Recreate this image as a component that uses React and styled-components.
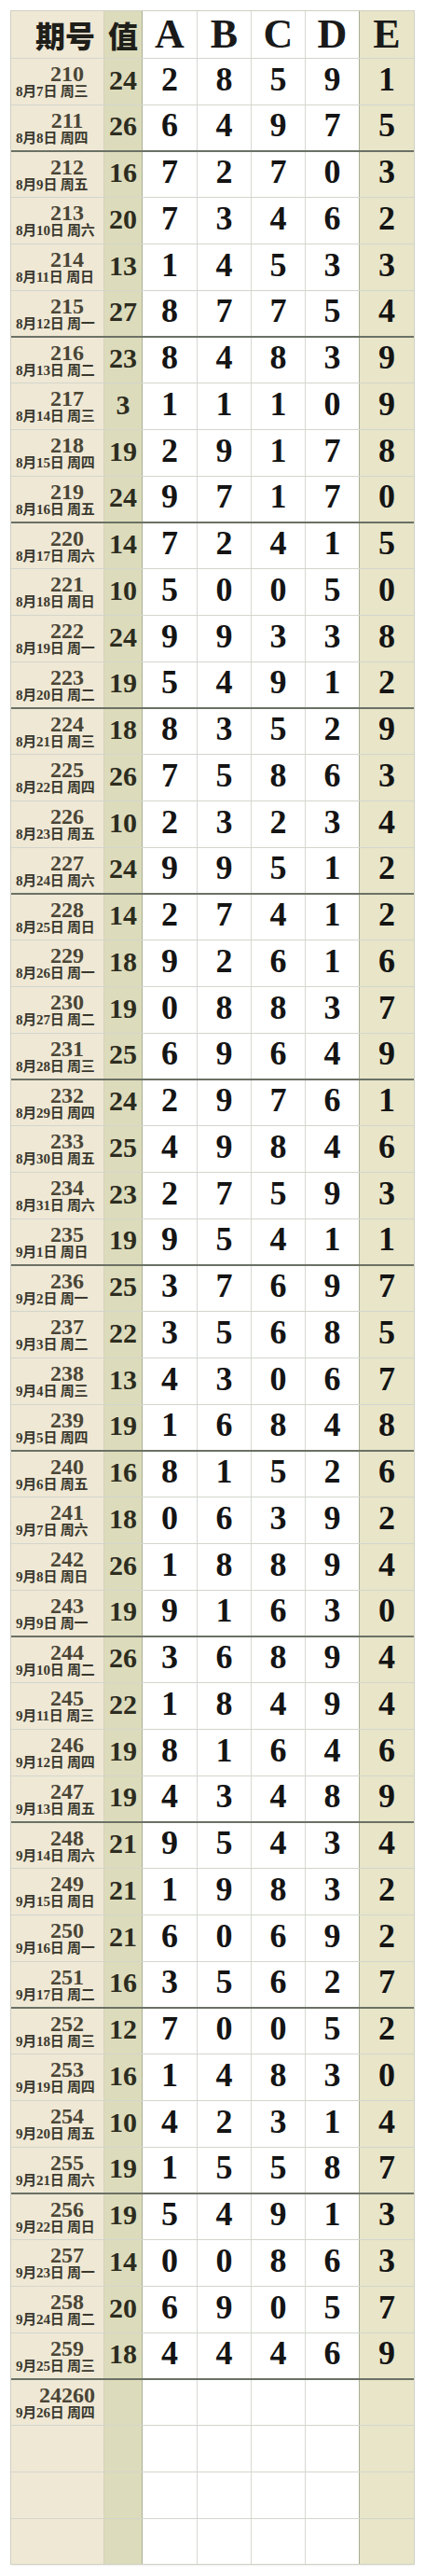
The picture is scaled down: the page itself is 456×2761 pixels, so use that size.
import React from "react";
import styled, { createGlobalStyle } from "styled-components";

const GlobalStyle = createGlobalStyle`
  html, body { margin: 0; padding: 0; background: #ffffff; }
  body { font-family: "Liberation Serif", "Noto Sans CJK SC", serif; }
`;

const COLS = "99px 42px 58px 58px 58px 58px 59px";
const ROW_H = "49.75px";

const Page = styled.div`
  padding: 12px 12px 13px 12px;
  width: 432px;
`;

const Table = styled.div`
  display: flex;
  flex-direction: column;
  width: 432px;
  box-shadow: 0 0 0 1px #cfd0c2, 0 1px 3px rgba(0, 0, 0, 0.12);
`;

const Row = styled.div`
  display: grid;
  grid-template-columns: ${COLS};
  height: ${ROW_H};
  box-sizing: border-box;
  border-top: ${(p) =>
    p.$first ? "none" : p.$divider ? "2px solid #6b7165" : "1px solid #d3d6cc"};
`;

const Cell = styled.div`
  box-sizing: border-box;
  display: flex;
  align-items: center;
  justify-content: center;
  min-width: 0;
`;

const PeriodCell = styled(Cell)`
  background: #efe8d5;
  flex-direction: column;
  align-items: stretch;
  justify-content: center;
`;

const HeadPeriod = styled(Cell)`
  background: #efe8d5;
  justify-content: flex-end;
  padding-right: 9px;
  font-family: "Noto Sans CJK SC", "Noto Sans", sans-serif;
  font-weight: 900;
  font-size: 32px;
  line-height: 50px;
  color: #1f1f1a;
`;

const ValueCell = styled(Cell)`
  background: #dcdbbb;
  border-left: 1px solid #d8d2bd;
  border-right: 1px solid #a9af95;
  font-family: "Liberation Serif", serif;
  font-weight: 700;
  font-size: 30px;
  line-height: 1;
  color: #2c2c20;
  align-items: flex-end;
  padding-bottom: 11px;
`;

const HeadValue = styled(ValueCell)`
  font-family: "Noto Sans CJK SC", "Noto Sans", sans-serif;
  font-weight: 900;
  font-size: 32px;
  line-height: 50px;
  align-items: center;
  padding-bottom: 0;
  color: #1f1f1a;
`;

const DigitCell = styled(Cell)`
  background: ${(p) => (p.$accent ? "#e8e5c8" : "#ffffff")};
  border-left: ${(p) => (p.$accent ? "1px solid #a9af97" : p.$firstDigit ? "none" : "1px solid #d6d9d1")};
  font-family: "Liberation Serif", serif;
  font-weight: 700;
  font-size: 36px;
  line-height: 1;
  color: #141414;
  align-items: flex-end;
  padding-bottom: 9px;
`;

const HeadLetter = styled(DigitCell)`
  font-size: 44px;
  line-height: 50px;
  align-items: center;
  padding-bottom: 0;
  color: #1a1a1a;
`;

const PeriodNo = styled.div`
  font-family: "Liberation Serif", serif;
  font-weight: 700;
  font-size: 24px;
  line-height: 22px;
  color: #4a4536;
  text-align: center;
  padding-left: 21px;
  white-space: nowrap;
`;

const PeriodDate = styled.div`
  font-family: "Liberation Serif", "Noto Sans CJK SC", serif;
  font-weight: 700;
  font-size: 15px;
  line-height: 16px;
  color: #3a382e;
  padding-left: 5px;
  white-space: nowrap;
  letter-spacing: -0.2px;
`;

const raw = `24 2 8 5 9 1
26 6 4 9 7 5
16 7 2 7 0 3
20 7 3 4 6 2
13 1 4 5 3 3
27 8 7 7 5 4
23 8 4 8 3 9
3 1 1 1 0 9
19 2 9 1 7 8
24 9 7 1 7 0
14 7 2 4 1 5
10 5 0 0 5 0
24 9 9 3 3 8
19 5 4 9 1 2
18 8 3 5 2 9
26 7 5 8 6 3
10 2 3 2 3 4
24 9 9 5 1 2
14 2 7 4 1 2
18 9 2 6 1 6
19 0 8 8 3 7
25 6 9 6 4 9
24 2 9 7 6 1
25 4 9 8 4 6
23 2 7 5 9 3
19 9 5 4 1 1
25 3 7 6 9 7
22 3 5 6 8 5
13 4 3 0 6 7
19 1 6 8 4 8
16 8 1 5 2 6
18 0 6 3 9 2
26 1 8 8 9 4
19 9 1 6 3 0
26 3 6 8 9 4
22 1 8 4 9 4
19 8 1 6 4 6
19 4 3 4 8 9
21 9 5 4 3 4
21 1 9 8 3 2
21 6 0 6 9 2
16 3 5 6 2 7
12 7 0 0 5 2
16 1 4 8 3 0
10 4 2 3 1 4
19 1 5 5 8 7
19 5 4 9 1 3
14 0 0 8 6 3
20 6 9 0 5 7
18 4 4 4 6 9`;

const WEEK = ["周日", "周一", "周二", "周三", "周四", "周五", "周六"];

function dateLabel(offset) {
  const d = new Date(2024, 7, 7 + offset);
  return `${d.getMonth() + 1}月${d.getDate()}日 ${WEEK[d.getDay()]}`;
}

const rows = raw.split("\n").map((line, i) => {
  const [v, ...digits] = line.trim().split(/\s+/);
  return { no: String(210 + i), date: dateLabel(i), value: v, digits };
});
rows.push({ no: "24260", date: dateLabel(50), value: "", digits: ["", "", "", "", ""] });
for (let k = 0; k < 3; k++) {
  rows.push({ no: "", date: "", value: "", digits: ["", "", "", "", ""] });
}

export default function App() {
  return (
    <>
      <GlobalStyle />
      <Page>
        <Table>
          <Row $first>
            <HeadPeriod>期号</HeadPeriod>
            <HeadValue>值</HeadValue>
            {["A", "B", "C", "D", "E"].map((l, i) => (
              <HeadLetter key={l} $firstDigit={i === 0} $accent={i === 4}>
                {l}
              </HeadLetter>
            ))}
          </Row>
          {rows.map((r, i) => (
            <Row key={i} $divider={i >= 2 && (i - 2) % 4 === 0 && i <= 50}>
              <PeriodCell>
                {r.no && <PeriodNo>{r.no}</PeriodNo>}
                {r.date && <PeriodDate>{r.date}</PeriodDate>}
              </PeriodCell>
              <ValueCell>{r.value}</ValueCell>
              {r.digits.map((d, j) => (
                <DigitCell key={j} $firstDigit={j === 0} $accent={j === 4}>
                  {d}
                </DigitCell>
              ))}
            </Row>
          ))}
        </Table>
      </Page>
    </>
  );
}
